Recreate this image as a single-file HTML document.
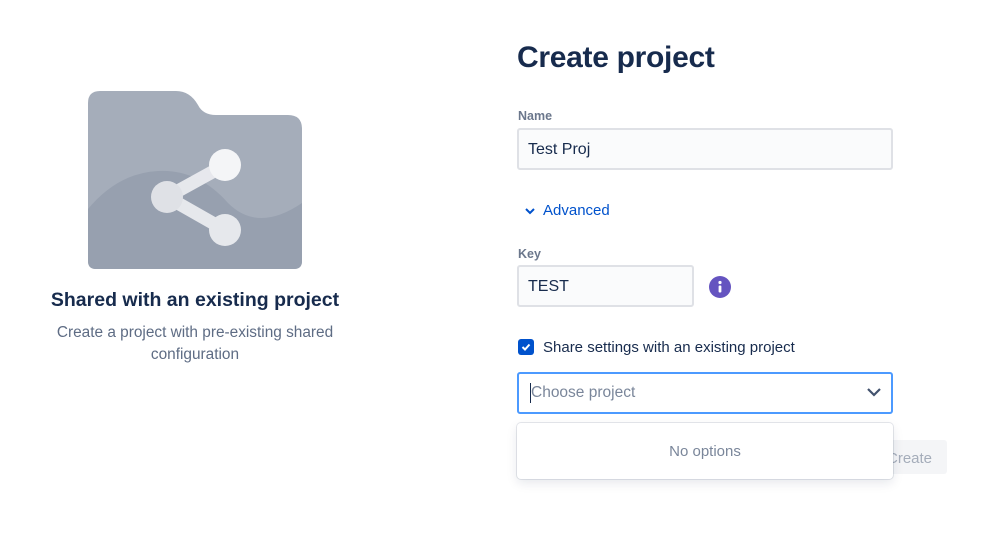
<!DOCTYPE html>
<html><head><style>
*{margin:0;padding:0;box-sizing:border-box}
body{width:998px;height:541px;background:#fff;font-family:"Liberation Sans",sans-serif;position:relative;overflow:hidden;color:#172b4d}
.a{position:absolute}
.inp{position:absolute;background:#fafbfc;border:2px solid #dfe1e6;border-radius:3px;font-size:16px;padding-left:9px;padding-top:2px;display:flex;align-items:center;color:#172b4d}
.lbl{position:absolute;font-size:12.5px;font-weight:bold;color:#6b778c}
</style></head><body>
<svg class="a" style="left:88px;top:91px" width="215" height="179" viewBox="0 0 215 179">
<defs><clipPath id="c"><path d="M0 12 Q0 0 12 0 L88 0 Q102 0 110 14 Q115 24 128 24 L200 24 Q214 24 214 38 L214 170 Q214 178 206 178 L8 178 Q0 178 0 170 Z"/></clipPath></defs>
<g clip-path="url(#c)">
<rect width="215" height="179" fill="#a5adba"/>
<path d="M0 118 Q30 82 70 80 Q110 78 140 112 Q170 142 214 112 L214 179 L0 179 Z" fill="#97a0af"/>
</g>
<g stroke="#ebecf0" stroke-width="13" stroke-linecap="round" opacity="0.95">
<line x1="79" y1="106" x2="137" y2="74"/>
<line x1="79" y1="106" x2="137" y2="139"/>
</g>
<circle cx="137" cy="74" r="16" fill="#f4f5f7"/>
<circle cx="79" cy="106" r="16" fill="#dfe1e6"/>
<circle cx="137" cy="139" r="16" fill="#e6e8ec"/>
</svg>
<div class="a" style="left:0;width:390px;top:289px;text-align:center;font-size:19.5px;font-weight:bold">Shared with an existing project</div>
<div class="a" style="left:0;width:390px;top:322px;text-align:center;font-size:15.4px;color:#5e6c84;line-height:22px">Create a project with pre-existing shared<br>configuration</div>

<div class="a" style="left:517px;top:41px;font-size:30px;font-weight:bold;letter-spacing:-0.3px">Create project</div>
<div class="lbl" style="left:518px;top:109px">Name</div>
<div class="inp" style="left:517px;top:128px;width:376px;height:42px">Test Proj</div>
<svg class="a" style="left:524px;top:206px" width="12" height="10"><path d="M2 3 L6 7 L10 3" stroke="#0052cc" stroke-width="2" fill="none"/></svg>
<div class="a" style="left:543px;top:202px;font-size:15px;color:#0052cc">Advanced</div>
<div class="lbl" style="left:518px;top:247px">Key</div>
<div class="inp" style="left:517px;top:265px;width:177px;height:42px">TEST</div>
<svg class="a" style="left:709px;top:276px" width="22" height="22"><circle cx="11" cy="11" r="11" fill="#6554c0"/><circle cx="11" cy="6.5" r="1.6" fill="#fff"/><rect x="9.6" y="9.5" width="2.8" height="7" rx="1" fill="#fff"/></svg>
<svg class="a" style="left:518px;top:339px" width="16" height="16"><rect width="16" height="16" rx="3" fill="#0052cc"/><path d="M4.5 8 L7 10.5 L11.5 5.5" stroke="#fff" stroke-width="2" fill="none"/></svg>
<div class="a" style="left:543px;top:339px;font-size:15px">Share settings with an existing project</div>
<div class="a" style="left:883px;top:440px;width:64px;height:34px;background:#f4f5f7;border-radius:3px;font-size:15px;color:#a5adba;padding:10px 0 0 4px">Create</div>
<div class="a" style="left:517px;top:372px;width:376px;height:42px;border:2px solid #4c9aff;border-radius:3px;background:#fff"></div>
<div class="a" style="left:530px;top:383px;width:1px;height:20px;background:#172b4d"></div>
<div class="a" style="left:531px;top:384px;font-size:15.5px;color:#7a869a">Choose project</div>
<svg class="a" style="left:866px;top:386px" width="16" height="12"><path d="M2 3 L8 9 L14 3" stroke="#42526e" stroke-width="2.2" fill="none"/></svg>
<div class="a" style="left:517px;top:423px;width:376px;height:56px;background:#fff;border-radius:4px;box-shadow:0 0 0 1px rgba(9,30,66,.1),0 4px 11px rgba(9,30,66,.1);text-align:center;font-size:15px;color:#7a869a;padding-top:20px">No options</div>
</body></html>
